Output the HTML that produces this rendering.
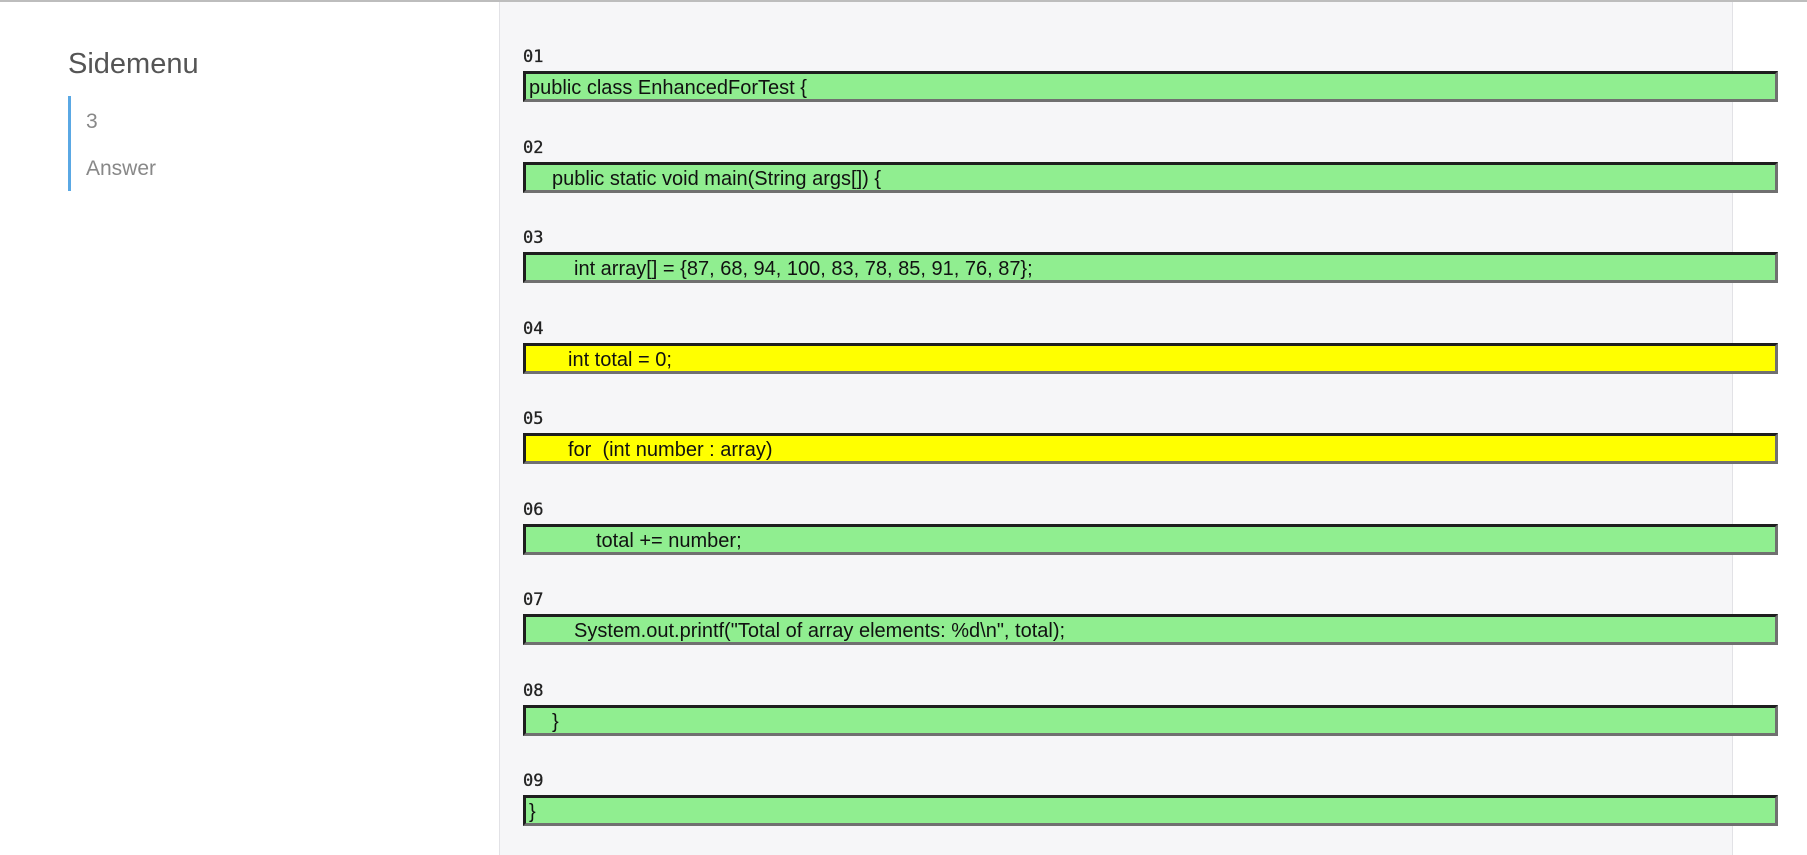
<!DOCTYPE html>
<html><head><meta charset="utf-8"><style>
*{margin:0;padding:0;box-sizing:border-box}
body{width:1807px;height:855px;background:#fff;position:relative;overflow:hidden;font-family:"Liberation Sans",Arial,sans-serif}
.top{position:absolute;left:0;top:0;width:1807px;height:2px;background:#bdbdbd}
.side h1{position:absolute;left:68px;top:48px;font-size:29px;font-weight:normal;color:#555}
.bar{position:absolute;left:68px;top:96px;width:3px;height:95px;background:#5aa8e4}
.item{position:absolute;left:86px;font-size:21px;color:#888}
.panel{position:absolute;left:499px;top:2px;width:1234px;height:853px;background:#f6f6f8;border-left:1px solid #e2e2e6;border-right:1px solid #e2e2e6}
.lbl{position:absolute;left:523px;font-family:"DejaVu Sans Mono","Liberation Mono",monospace;font-size:17px;color:#222;-webkit-text-stroke:0.3px #222;margin-top:1px}
.box{position:absolute;left:523px;width:1255px;height:31px;border-style:solid;border-width:3px;border-color:#1e1e1e #707070 #707070 #1e1e1e;background:#90ee90;font-size:20px;line-height:25px;padding-top:2px;color:#111;white-space:pre;padding-left:3px}
.y{background:#ffff00}
</style></head><body>
<div class="top"></div>
<div class="side"><h1>Sidemenu</h1></div>
<div class="bar"></div>
<div class="item" style="top:110px">3</div>
<div class="item" style="top:157px">Answer</div>
<div class="panel"></div>

<div class="lbl" style="top:46px">01</div>
<div class="box" style="top:71px">public class EnhancedForTest {</div>
<div class="lbl" style="top:137px">02</div>
<div class="box" style="top:162px;padding-left:26px">public static void main(String args[]) {</div>
<div class="lbl" style="top:227px">03</div>
<div class="box" style="top:252px;padding-left:48px">int array[] = {87, 68, 94, 100, 83, 78, 85, 91, 76, 87};</div>
<div class="lbl" style="top:318px">04</div>
<div class="box y" style="top:343px;padding-left:42px">int total = 0;</div>
<div class="lbl" style="top:408px">05</div>
<div class="box y" style="top:433px;padding-left:42px">for  (int number : array)</div>
<div class="lbl" style="top:499px">06</div>
<div class="box" style="top:524px;padding-left:70px">total += number;</div>
<div class="lbl" style="top:589px">07</div>
<div class="box" style="top:614px;padding-left:48px">System.out.printf("Total of array elements: %d\n", total);</div>
<div class="lbl" style="top:680px">08</div>
<div class="box" style="top:705px;padding-left:26px">}</div>
<div class="lbl" style="top:770px">09</div>
<div class="box" style="top:795px">}</div>
</body></html>
